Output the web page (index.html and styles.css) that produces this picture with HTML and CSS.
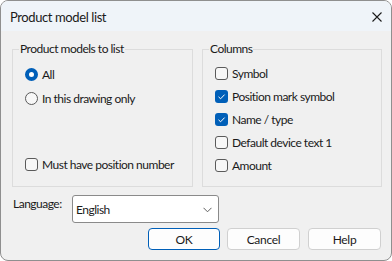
FILE: index.html
```html
<!DOCTYPE html>
<html lang="en">
<head>
    <meta charset="UTF-8">
    <meta name="viewport" content="width=device-width, initial-scale=1.0">
    <title>Product model list</title>
    <link rel="stylesheet" href="styles.css">
</head>
<body>
    <div class="window">
        <div class="titlebar">
            <span class="title">Product model list</span>
            <svg class="close" width="10" height="10" viewBox="0 0 10 10">
                <path d="M0.5 0.5 L9.5 9.5 M9.5 0.5 L0.5 9.5" stroke="#1b1b1b" stroke-width="1.1" fill="none"/>
            </svg>
        </div>

        <div class="content">
            <div class="groups">
                <fieldset class="group">
                    <legend>Product models to list</legend>
                    <div class="option radio-row">
                        <span class="radio checked"></span>
                        <span>All</span>
                    </div>
                    <div class="option radio-row">
                        <span class="radio"></span>
                        <span>In this drawing only</span>
                    </div>
                    <div class="option radio-row bottom-option">
                        <span class="checkbox"></span>
                        <span>Must have position number</span>
                    </div>
                </fieldset>

                <fieldset class="group">
                    <legend>Columns</legend>
                    <div class="option check-row">
                        <span class="checkbox"></span>
                        <span>Symbol</span>
                    </div>
                    <div class="option check-row">
                        <span class="checkbox checked">
                            <svg width="13" height="13" viewBox="0 0 13 13"><path d="M3.5 6.8 L5.6 8.8 L9.6 4.6" stroke="#fff" stroke-width="1" fill="none"/></svg>
                        </span>
                        <span>Position mark symbol</span>
                    </div>
                    <div class="option check-row">
                        <span class="checkbox checked">
                            <svg width="13" height="13" viewBox="0 0 13 13"><path d="M3.5 6.8 L5.6 8.8 L9.6 4.6" stroke="#fff" stroke-width="1" fill="none"/></svg>
                        </span>
                        <span>Name / type</span>
                    </div>
                    <div class="option check-row">
                        <span class="checkbox"></span>
                        <span>Default device text 1</span>
                    </div>
                    <div class="option check-row">
                        <span class="checkbox"></span>
                        <span>Amount</span>
                    </div>
                </fieldset>
            </div>

            <div class="language-row">
                <span class="language-label">Language:</span>
                <div class="combo">
                    <span>English</span>
                    <svg width="9" height="6" viewBox="0 0 9 6">
                        <path d="M0.5 0.8 L4.5 4.8 L8.5 0.8" stroke="#5f5f5f" stroke-width="1" fill="none"/>
                    </svg>
                </div>
            </div>

            <div class="buttons">
                <button class="button default">OK</button>
                <button class="button">Cancel</button>
                <button class="button">Help</button>
            </div>
        </div>
    </div>
</body>
</html>
```

FILE: styles.css
```css
html {
    background-color: #ffffff;
}
body {
    margin: 0;
    font-family: Lato, 'Noto Sans', sans-serif;
    font-size: 12px;
    letter-spacing: -0.5px;
    color: #1a1a1a;
}
.window {
    box-sizing: border-box;
    width: 392px;
    height: 261px;
    border: 1px solid #8f8f8f;
    border-radius: 8px;
    background-color: #f0f0f0;
    overflow: hidden;
}
.titlebar {
    height: 30px;
    background-color: #eff4f9;
    display: flex;
    align-items: center;
    justify-content: space-between;
    padding: 0 9px 0 9px;
}
.title {
    font-size: 13px;
    letter-spacing: -0.4px;
    margin-top: 1px;
}
.close {
    margin-top: 1px;
}
.content {
    padding: 10px 8px 0 11px;
}
.groups {
    display: grid;
    grid-template-columns: 181px 180px;
    column-gap: 9px;
}
.group {
    margin: 0;
    padding: 5px 0 9px 0;
    border: 1px solid #dcdcdc;
    min-width: 0;
}
.group legend {
    margin-left: 6px;
    padding: 0 1px;
    line-height: 16px;
}
.option {
    display: flex;
    align-items: center;
    gap: 4px;
    padding-left: 12px;
    white-space: nowrap;
}
.radio-row {
    height: 24px;
}
.check-row {
    height: 23px;
}
.bottom-option {
    margin-top: 42px;
}
.radio {
    box-sizing: border-box;
    width: 13px;
    height: 13px;
    border: 1px solid #5a5a5a;
    border-radius: 50%;
    background-color: #f7f7f7;
    flex-shrink: 0;
}
.radio.checked {
    border: 4px solid #005fb8;
    background-color: #ffffff;
}
.checkbox {
    box-sizing: border-box;
    width: 13px;
    height: 13px;
    border: 1px solid #5a5a5a;
    border-radius: 3px;
    background-color: #f7f7f7;
    flex-shrink: 0;
    display: flex;
}
.checkbox.checked {
    border: none;
    background-color: #005fb8;
}
.language-row {
    display: flex;
    align-items: flex-start;
    margin-top: 8px;
}
.language-label {
    width: 59px;
    padding-left: 1px;
    line-height: 16px;
    margin-top: 1px;
}
.combo {
    box-sizing: border-box;
    width: 147px;
    height: 28px;
    background-color: #ffffff;
    border: 1px solid #8a8a8a;
    border-radius: 3px;
    display: flex;
    align-items: center;
    justify-content: space-between;
    padding: 1px 6px 0 3px;
}
.buttons {
    display: flex;
    justify-content: flex-end;
    gap: 8px;
    margin-top: 5px;
    margin-right: 2px;
}
.button {
    box-sizing: border-box;
    width: 73px;
    height: 22px;
    background-color: #fdfdfd;
    border: 1px solid #d0d0d0;
    border-radius: 4px;
    font-family: inherit;
    font-size: 12px;
    letter-spacing: -0.3px;
    color: #1a1a1a;
    padding: 0;
}
.button.default {
    width: 72px;
    margin-right: -1px;
    border: 1px solid #005fb8;
    box-shadow: inset 0 0 0 1px #ffffff;
}
```
